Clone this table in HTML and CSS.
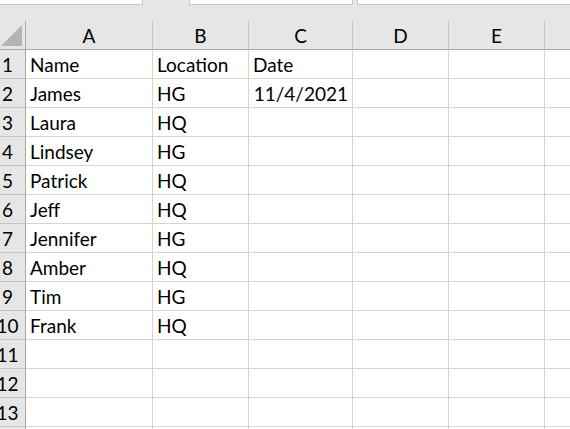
FILE: index.html
```html
<!DOCTYPE html>
<html>
<head>
<meta charset="utf-8">
<link rel="stylesheet" href="styles.css">
</head>
<body>
<div class="topbar">
  <div class="box box1"></div>
  <div class="box box2"></div>
  <div class="box box3"></div>
</div>
<div class="sheet">
  <div class="corner"><svg width="21" height="21" viewBox="0 0 21 21"><polygon points="0,21 21,0 21,21" fill="#b3b3b3"/></svg></div>
  <div class="ch">A</div><div class="ch">B</div><div class="ch">C</div><div class="ch">D</div><div class="ch">E</div><div class="ch last"></div>

  <div class="rh">1</div><div class="c">Name</div><div class="c">Location</div><div class="c">Date</div><div class="c"></div><div class="c"></div><div class="c"></div>
  <div class="rh">2</div><div class="c">James</div><div class="c">HG</div><div class="c num">11/4/2021</div><div class="c"></div><div class="c"></div><div class="c"></div>
  <div class="rh">3</div><div class="c">Laura</div><div class="c">HQ</div><div class="c"></div><div class="c"></div><div class="c"></div><div class="c"></div>
  <div class="rh">4</div><div class="c">Lindsey</div><div class="c">HG</div><div class="c"></div><div class="c"></div><div class="c"></div><div class="c"></div>
  <div class="rh">5</div><div class="c">Patrick</div><div class="c">HQ</div><div class="c"></div><div class="c"></div><div class="c"></div><div class="c"></div>
  <div class="rh">6</div><div class="c">Jeff</div><div class="c">HQ</div><div class="c"></div><div class="c"></div><div class="c"></div><div class="c"></div>
  <div class="rh">7</div><div class="c">Jennifer</div><div class="c">HG</div><div class="c"></div><div class="c"></div><div class="c"></div><div class="c"></div>
  <div class="rh">8</div><div class="c">Amber</div><div class="c">HQ</div><div class="c"></div><div class="c"></div><div class="c"></div><div class="c"></div>
  <div class="rh">9</div><div class="c">Tim</div><div class="c">HG</div><div class="c"></div><div class="c"></div><div class="c"></div><div class="c"></div>
  <div class="rh">10</div><div class="c">Frank</div><div class="c">HQ</div><div class="c"></div><div class="c"></div><div class="c"></div><div class="c"></div>
  <div class="rh">11</div><div class="c"></div><div class="c"></div><div class="c"></div><div class="c"></div><div class="c"></div><div class="c"></div>
  <div class="rh">12</div><div class="c"></div><div class="c"></div><div class="c"></div><div class="c"></div><div class="c"></div><div class="c"></div>
  <div class="rh">13</div><div class="c"></div><div class="c"></div><div class="c"></div><div class="c"></div><div class="c"></div><div class="c"></div>
  <div class="rh">14</div><div class="c"></div><div class="c"></div><div class="c"></div><div class="c"></div><div class="c"></div><div class="c"></div>
</div>
</body>
</html>
```

FILE: styles.css
```css
html, body {
  margin: 0;
  padding: 0;
  background: #ffffff;
  overflow: hidden;
  width: 570px;
  height: 429px;
}
body {
  font-family: Lato, "Open Sans", sans-serif;
  font-size: 19px;
  color: #000;
}
.topbar {
  height: 21px;
  background: #e6e6e6;
  display: flex;
  align-items: flex-start;
}
.box {
  height: 4px;
  background: #fff;
  border: 1px solid #c6c6c6;
  border-top: none;
  box-sizing: border-box;
  height: 5px;
}
.box1 { width: 144px; margin-left: -1px; }
.box2 { width: 164px; margin-left: 46px; }
.box3 { flex: 1; margin-left: 4px; margin-right: -2px; }

.sheet {
  display: grid;
  margin-left: -10px;
  grid-template-columns: 36px 127px 96px 104px 96px 96px 100px;
  grid-auto-rows: 29px;
}
.corner, .ch, .rh {
  background: #e6e6e6;
  box-sizing: border-box;
}
.corner {
  border-right: 1px solid #ababab;
  border-bottom: 1px solid #ababab;
  display: flex;
  align-items: flex-end;
  justify-content: flex-end;
  padding: 0 3px 3px 0;
}
.ch {
  border-bottom: 1px solid #ababab;
  border-right: 1px solid #c4c4c4;
  text-align: center;
  line-height: 30px;
}
.ch.last { border-right: none; }
.rh {
  border-right: 1px solid #ababab;
  border-bottom: 1px solid #c4c4c4;
  text-align: center;
  line-height: 30px;
}
.c {
  box-sizing: border-box;
  border-right: 1px solid #d4d4d4;
  border-bottom: 1px solid #d4d4d4;
  padding: 0 4px;
  line-height: 30px;
  white-space: nowrap;
  overflow: hidden;
}
.num { text-align: right; }
```
